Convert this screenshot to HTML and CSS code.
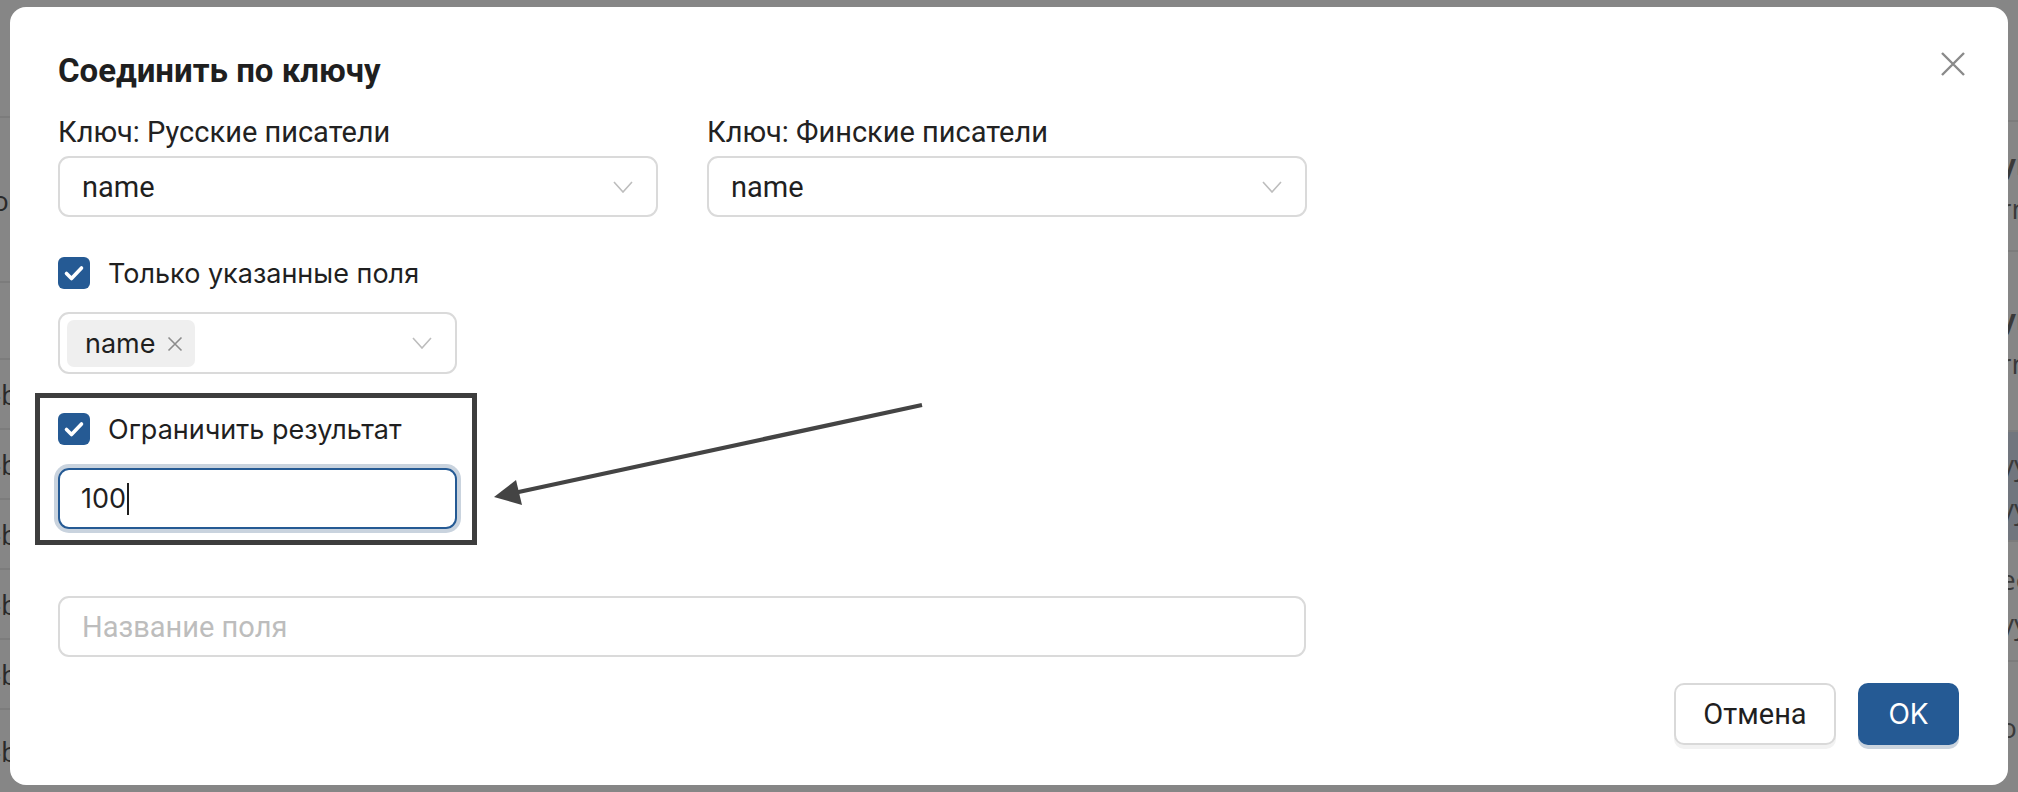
FILE: index.html
```html
<!DOCTYPE html>
<html lang="ru">
<head>
<meta charset="utf-8">
<title>Соединить по ключу</title>
<link rel="stylesheet" href="styles.css">
</head>
<body>
<div class="backdrop">
  <div class="bd-col bd-left">
    <div class="bd-row r1"></div>
    <div class="bd-row r2"><span class="frag f-left">ос</span></div>
    <div class="bd-row r3"></div>
    <div class="bd-row r4"><span class="frag f-left">-b</span></div>
    <div class="bd-row r5"><span class="frag f-left">-b</span></div>
    <div class="bd-row r6"><span class="frag f-left">-b</span></div>
    <div class="bd-row r7"><span class="frag f-left">-b</span></div>
    <div class="bd-row r8"><span class="frag f-left">-b</span></div>
    <div class="bd-row r9"><span class="frag f-left">-b</span></div>
  </div>
  <div class="bd-col bd-right">
    <div class="bd-row q1"></div>
    <div class="bd-row q2"><span class="frag f-right b">ун</span><span class="frag f-right">rn</span></div>
    <div class="bd-row q3"><span class="frag f-right b">ун</span><span class="frag f-right">rn</span></div>
    <div class="bd-row q4 sel"><span class="frag f-right">уу</span><span class="frag f-right">уу</span></div>
    <div class="bd-row q5"><span class="frag f-right">ее</span><span class="frag f-right">уу</span></div>
    <div class="bd-row q6"><span class="frag f-right">ор</span></div>
  </div>
</div>

<div class="modal">
  <div class="modal-head">
    <h1 class="modal-title">Соединить по ключу</h1>
    <button class="close-btn" aria-label="Закрыть">
      <svg width="26" height="26" viewBox="0 0 26 26"><path d="M2 2L24 24M24 2L2 24" stroke="#8a8a8a" stroke-width="2.4" fill="none"/></svg>
    </button>
  </div>

  <div class="keys">
    <div class="field">
      <div class="label">Ключ: Русские писатели</div>
      <div class="select">
        <span class="select-value">name</span>
        <svg class="chevron" width="20" height="12" viewBox="0 0 20 12"><path d="M1 1L10 11L19 1" stroke="#bdbdbd" stroke-width="1.6" fill="none"/></svg>
      </div>
    </div>
    <div class="field">
      <div class="label">Ключ: Финские писатели</div>
      <div class="select">
        <span class="select-value">name</span>
        <svg class="chevron" width="20" height="12" viewBox="0 0 20 12"><path d="M1 1L10 11L19 1" stroke="#bdbdbd" stroke-width="1.6" fill="none"/></svg>
      </div>
    </div>
  </div>

  <label class="check-row first-check">
    <span class="checkbox"><svg width="32" height="32" viewBox="0 0 32 32"><path d="M8.5 16.5L13.5 21.5L23.5 11" stroke="#fff" stroke-width="3.6" fill="none" stroke-linecap="round" stroke-linejoin="round"/></svg></span>
    <span class="check-label">Только указанные поля</span>
  </label>

  <div class="multi">
    <span class="tag">name<svg class="tag-x" width="16" height="16" viewBox="0 0 16 16"><path d="M1.5 1.5L14.5 14.5M14.5 1.5L1.5 14.5" stroke="#8c8c8c" stroke-width="1.6" fill="none"/></svg></span>
    <svg class="chevron" width="20" height="12" viewBox="0 0 20 12"><path d="M1 1L10 11L19 1" stroke="#bdbdbd" stroke-width="1.6" fill="none"/></svg>
  </div>

  <div class="highlight">
    <label class="check-row">
      <span class="checkbox"><svg width="32" height="32" viewBox="0 0 32 32"><path d="M8.5 16.5L13.5 21.5L23.5 11" stroke="#fff" stroke-width="3.6" fill="none" stroke-linecap="round" stroke-linejoin="round"/></svg></span>
      <span class="check-label">Ограничить результат</span>
    </label>
    <div class="limit-input"><span class="limit-value">100</span><span class="caret"></span></div>
  </div>

  <div class="name-input"><span class="placeholder">Название поля</span></div>

  <div class="actions">
    <button class="btn btn-cancel">Отмена</button>
    <button class="btn btn-ok">OK</button>
  </div>
</div>

<svg class="arrow" width="2018" height="792" viewBox="0 0 2018 792">
  <line x1="922" y1="405" x2="514" y2="493" stroke="#444" stroke-width="4.2"/>
  <polygon points="494,497 516,480 522,505" fill="#444"/>
</svg>
</body>
</html>
```

FILE: styles.css
```css
* { box-sizing: border-box; }
html, body {
  margin: 0;
  padding: 0;
}
body {
  width: 2018px;
  height: 792px;
  overflow: hidden;
  background: #868686;
  position: relative;
  font-family: Roboto, "Liberation Sans", sans-serif;
  color: #1f1f1f;
}

/* backdrop (page behind the overlay) */
.backdrop {
  display: flex;
  justify-content: space-between;
  height: 792px;
}
.bd-col {
  display: flex;
  flex-direction: column;
  width: 40px;
}
.bd-row {
  border-bottom: 2px solid #7c7c7c;
  display: flex;
  flex-direction: column;
  justify-content: center;
  gap: 14px;
  overflow: hidden;
}
.r1 { height: 118px; }
.r2 { height: 165px; }
.r3 { height: 77px; }
.r4, .r5, .r6, .r7, .r8 { height: 70px; }
.r9 { flex: 1; border-bottom: 0; }
.q1 { height: 122px; }
.q2 { height: 130px; }
.q3 { height: 180px; }
.q4 { height: 110px; }
.q5 { height: 120px; }
.q6 { flex: 1; border-bottom: 0; }
.bd-row.sel { background: #71767e; }
.frag {
  font-family: "Open Sans", sans-serif;
  font-size: 28px;
  line-height: 30px;
  color: #2a2a2a;
  white-space: nowrap;
}
.f-left { margin-left: -8px; }
.f-right { margin-left: 22px; color: #3a3a3a; }
.f-right.b { font-weight: 700; }

/* modal */
.modal {
  position: absolute;
  left: 10px;
  top: 7px;
  width: 1998px;
  height: 778px;
  background: #fff;
  border-radius: 16px;
  padding: 0 48px;
  display: flex;
  flex-direction: column;
}
.modal-head {
  display: flex;
  justify-content: space-between;
  align-items: flex-start;
  height: 107px;
  padding-top: 44px;
}
.modal-title {
  margin: 0;
  font-family: Roboto, sans-serif;
  font-weight: 700;
  font-size: 33px;
  line-height: 40px;
  color: #1f1f1f;
}
.close-btn {
  border: 0;
  background: none;
  padding: 0;
  margin-top: 0;
  margin-right: -6px;
  width: 26px;
  height: 26px;
  display: flex;
}

.keys {
  display: flex;
  gap: 49px;
}
.field {
  display: flex;
  flex-direction: column;
  width: 600px;
}
.label {
  font-size: 29px;
  line-height: 36px;
  color: #222;
  margin-bottom: 6px;
}
.select {
  height: 61px;
  border: 2px solid #dadada;
  border-radius: 11px;
  display: flex;
  align-items: center;
  justify-content: space-between;
  padding: 0 23px 0 22px;
}
.select-value {
  font-size: 29px;
  color: #1f1f1f;
}
.chevron { display: block; }

.check-row {
  display: flex;
  align-items: center;
  gap: 18px;
  height: 32px;
}
.first-check { margin-top: 40px; }
.checkbox {
  width: 32px;
  height: 32px;
  border-radius: 6px;
  background: #255a94;
  display: flex;
}
.check-label {
  font-family: Inter, "Open Sans", sans-serif;
  font-size: 27px;
  color: #1f1f1f;
}

.multi {
  margin-top: 23px;
  width: 399px;
  height: 62px;
  border: 2px solid #dadada;
  border-radius: 11px;
  display: flex;
  align-items: center;
  justify-content: space-between;
  padding: 0 23px 0 7px;
}
.tag {
  height: 47px;
  background: #efefef;
  border-radius: 7px;
  display: flex;
  align-items: center;
  gap: 11px;
  padding: 0 12px 0 18px;
  font-family: Inter, sans-serif;
  font-size: 27px;
  color: #1f1f1f;
}
.tag-x { display: block; margin-top: 2px; }

.highlight {
  margin: 19px 0 0 -23px;
  width: 442px;
  height: 152px;
  border: 5px solid #3d3d3d;
  padding: 15px 15px 0 18px;
  display: flex;
  flex-direction: column;
}
.limit-input {
  margin-top: 23px;
  width: 399px;
  height: 61px;
  border: 2px solid #255a94;
  border-radius: 11px;
  box-shadow: 0 0 0 4px #c9d3de;
  display: flex;
  align-items: center;
  padding-left: 21px;
}
.limit-value {
  font-family: Inter, sans-serif;
  font-size: 27px;
  color: #1f1f1f;
}
.caret {
  width: 2px;
  height: 32px;
  background: #1f1f1f;
  margin-left: 1px;
}

.name-input {
  margin-top: 51px;
  width: 1248px;
  height: 61px;
  border: 2px solid #dadada;
  border-radius: 11px;
  display: flex;
  align-items: center;
  padding-left: 22px;
}
.placeholder {
  font-size: 29px;
  color: #bdbdbd;
}

.actions {
  margin-top: 26px;
  display: flex;
  justify-content: flex-end;
  gap: 22px;
  padding-right: 1px;
}
.btn {
  height: 62px;
  border-radius: 10px;
  font-size: 29px;
  padding: 0;
  cursor: pointer;
}
.btn-cancel {
  width: 162px;
  background: #fff;
  border: 2px solid #d9d9d9;
  color: #1f1f1f;
  font-family: Roboto, sans-serif;
  box-shadow: 0 4px 0 #f2f2f2;
}
.btn-ok {
  width: 101px;
  background: #255a94;
  border: 0;
  color: #fff;
  font-family: Inter, sans-serif;
  font-size: 28px;
  box-shadow: 0 4px 0 #cbd4de;
}

.arrow {
  position: absolute;
  left: 0;
  top: 0;
  pointer-events: none;
}
```
